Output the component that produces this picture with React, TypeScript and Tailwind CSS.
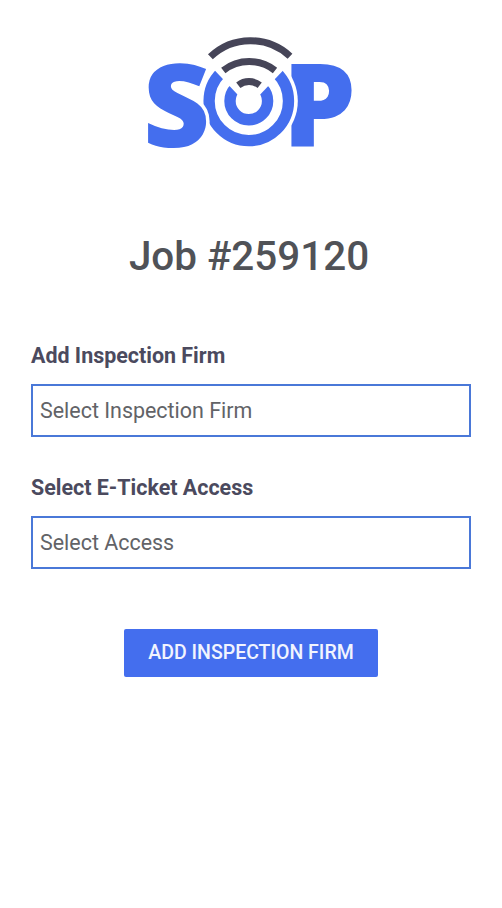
import { useState } from "react"

function Logo() {
    return (
        <svg
            className="mr-0.5 block h-[186px] w-[220px]"
            viewBox="140 0 220 186"
            role="img"
            aria-label="SOP"
        >
            <g fill="#446eee" fontFamily="'Open Sans', sans-serif" fontWeight={800}>
                <text transform="translate(282.6 146)" fontSize={116}>P</text>
                <circle cx={248.8} cy={101} r={49} fill="#fff" />
                <circle cx={248.8} cy={101} r={39.7} fill="none" stroke="#446eee" strokeWidth={11.3} />
                <circle cx={248.8} cy={101} r={18.8} fill="none" stroke="#446eee" strokeWidth={11.4} />
                <path d="M248.8 106.5L204 59V50h90v9z" fill="#fff" />
                <text
                    transform="translate(143 147)"
                    fontSize={116}
                    stroke="#fff"
                    strokeWidth={7}
                    paintOrder="stroke"
                >
                    S
                </text>
            </g>
            <g fill="none" stroke="#464558" strokeWidth={7}>
                <path d="M210.4 56.8A58 58 0 0 1 290 56.2" />
                <path d="M223.3 70.4A42 42 0 0 1 275 70.4" />
                <path d="M238.3 85.2A17.8 17.8 0 0 1 259.7 85.2" />
            </g>
        </svg>
    )
}

interface FieldProps {
    id: string
    label: string
    placeholder: string
}

function Field({ id, label, placeholder }: FieldProps) {
    const [value, setValue] = useState("")
    return (
        <div>
            <label htmlFor={id} className="block pt-px text-[21.45px] leading-7 font-bold text-[#4b4a5e]">
                {label}
            </label>
            <input
                id={id}
                value={value}
                onChange={(e) => setValue(e.target.value)}
                placeholder={placeholder}
                className="mt-3.5 block h-[53px] w-full border-2 border-[#4a78d8] bg-white px-[7px] text-[21.45px] text-[#626367] outline-none placeholder:text-[#626367]"
            />
        </div>
    )
}

export default function App() {
    return (
        <main className="flex min-h-screen flex-col items-center bg-white font-['Roboto',sans-serif]">
            <Logo />
            <h1 className="mt-[47px] mr-1 text-[40.4px] leading-12 font-medium text-[#505257]">Job #259120</h1>
            <form
                className="mt-[60px] flex w-full flex-col gap-9 px-[31px]"
                onSubmit={(e) => e.preventDefault()}
            >
                <Field id="firm" label="Add Inspection Firm" placeholder="Select Inspection Firm" />
                <Field id="access" label="Select E-Ticket Access" placeholder="Select Access" />
                <button className="mt-6 h-12 w-[254px] self-center rounded-xs bg-[#446eee] text-[19.5px] font-medium text-[#f1f4fe]">
                    ADD INSPECTION FIRM
                </button>
            </form>
        </main>
    )
}
